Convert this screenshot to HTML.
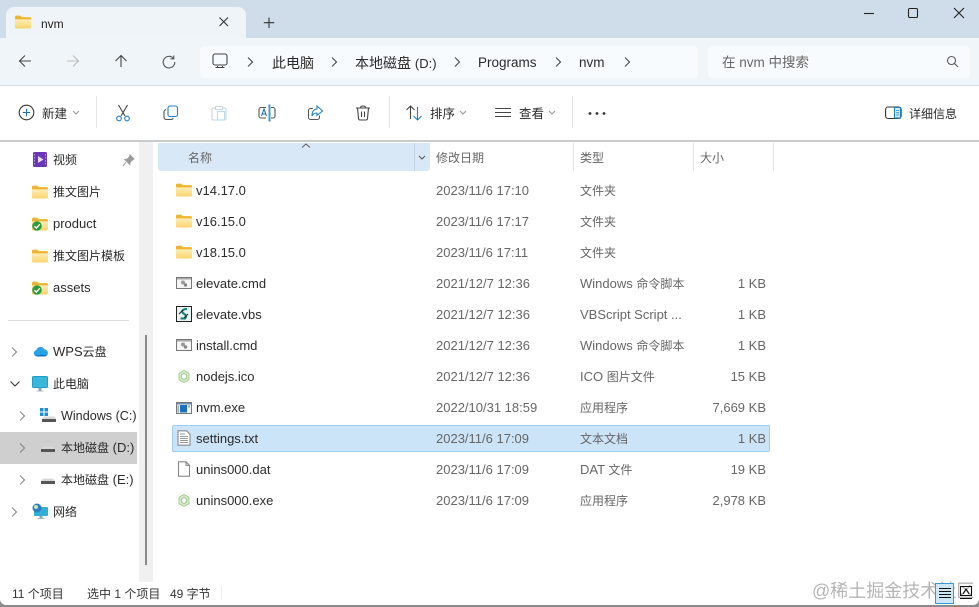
<!DOCTYPE html>
<html lang="zh-CN"><head><meta charset="utf-8"><title>nvm</title>
<style>
html,body{margin:0;padding:0;width:979px;height:607px;overflow:hidden;background:#8a8a8a}
body{position:relative;font-family:"Liberation Sans","Noto Sans CJK SC",sans-serif;font-size:13px;color:#222}
div,span,svg{position:absolute}
em{position:static;font-style:normal;font-size:12px}
.t{white-space:nowrap;line-height:20px;height:20px;margin-top:1px}
.d{left:436px;color:#666}
.y{left:580px;color:#666}
.s{right:213px;color:#666}
.n{left:196px;color:#2a2a2a}
.h{color:#666;font-size:12px;top:148px;margin-top:0}
.m{left:53px;font-size:12px;color:#2a2a2a}
.tb{font-size:12px;color:#2a2a2a;top:103px}
.a{font-size:14px;color:#2a2a2a;top:52px}
.i{fill:none;stroke:#444;stroke-width:1.1}
.sep{width:1px;background:#e1e4e8}
</style></head>
<body>
<svg width="0" height="0" style="position:absolute"><defs>
<linearGradient id="fg" x1="0" y1="0" x2="0" y2="1"><stop offset="0" stop-color="#ffeeb8"/><stop offset="1" stop-color="#fbd36b"/></linearGradient>
<symbol id="folder" viewBox="0 0 16 14"><path d="M0 2.200C0 1.200.6.600 1.500.600h3.600l1.600 1.500H14.800c.7 0 1.200.5 1.200 1.200V12c0 .9-.6 1.400-1.400 1.400H1.400C.6 13.400 0 12.900 0 12z" fill="#efb52f"/><path d="M0 4.400h16V12c0 .9-.6 1.400-1.400 1.400H1.400C.6 13.400 0 12.900 0 12z" fill="url(#fg)"/></symbol>
<symbol id="cmd" viewBox="0 0 16 12"><rect x=".5" y=".5" width="15" height="11" fill="#f5f5f5" stroke="#777"/><rect x="1" y="1" width="14" height="1.500" fill="#a9a9a9"/><circle cx="7" cy="5.500" r="2" fill="#999"/><circle cx="9.500" cy="8" r="1.700" fill="#888"/></symbol>
<symbol id="node" viewBox="0 0 12 13"><path d="M6 .5 11 3.300v6.400L6 12.500 1 9.700V3.300z" fill="#dceccf" stroke="#a6cc90"/><path d="M6 3.500 8.600 5v3L6 9.500 3.400 8V5z" fill="#fff" stroke="#9cc585"/></symbol>
<symbol id="chk" viewBox="0 0 10 10"><circle cx="5" cy="5" r="4.800" fill="#2f9a3a"/><path d="M2.400 5.200 4.300 7.100 7.800 3.300" fill="none" stroke="#fff" stroke-width="1.400"/></symbol>
<symbol id="drive" viewBox="0 0 14 6"><path d="M2 .5h10l2 2.500v3H0V3z" fill="#d8d8d8"/><rect y="3" width="14" height="3" fill="#555"/></symbol>
</defs></svg>

<div style="left:0;top:0;width:979px;height:605px;background:#fff;border-radius:0 0 6px 6px;overflow:hidden">
<!-- title -->
<div style="left:0;top:0;width:979px;height:38px;background:#cfdcea"></div>
<div style="left:6px;top:7px;width:240px;height:32px;background:#eff4f9;border-radius:8px 8px 0 0"></div>
<svg style="left:15px;top:15px" width="16" height="14"><use href="#folder"/></svg>
<span class="t" style="left:41px;top:13px;font-size:12px;color:#222;font-weight:400">nvm</span>
<svg class="i" style="left:218px;top:16px;stroke:#333" width="12" height="12"><path d="M1.500 1.500l8.500 8.500M10 1.500l-8.500 8.500"/></svg>
<svg class="i" style="left:262px;top:17px;stroke:#333" width="14" height="12"><path d="M7 .5v10.500M1.800 5.700h10.400"/></svg>
<svg class="i" style="left:863px;top:10px;stroke:#222" width="12" height="8"><path d="M1 3.500h10"/></svg>
<svg class="i" style="left:907px;top:7px;stroke:#222" width="12" height="12"><rect x="1.500" y="1.500" width="9" height="9" rx="1.200"/></svg>
<svg class="i" style="left:953px;top:7px;stroke:#222" width="12" height="12"><path d="M1 1l10 10M11 1L1 11"/></svg>
<!-- nav -->
<div style="left:0;top:38px;width:979px;height:47px;background:#f0f5fa"></div>
<div style="left:0;top:85px;width:979px;height:1px;background:#d6dae0"></div>
<svg class="i" style="left:17px;top:53px;stroke:#444" width="16" height="16"><path d="M14 8H2.500M8 2.500 2.500 8 8 13.500"/></svg>
<svg class="i" style="left:65px;top:53px;stroke:#bbb" width="16" height="16"><path d="M2 8h11.500M8 2.500 13.500 8 8 13.500"/></svg>
<svg class="i" style="left:113px;top:53px;stroke:#444" width="16" height="16"><path d="M8 14V2.500M2.500 8 8 2.500 13.500 8"/></svg>
<svg class="i" style="left:161px;top:54px;stroke:#555" width="16" height="16"><path d="M12.500 4.500A5.800 5.800 0 1 0 13.800 8M12.800 1.500v3.300H9.500"/></svg>
<div style="left:200px;top:46px;width:498px;height:32px;background:#f8fbfd;border-radius:4px"></div>
<div style="left:708px;top:46px;width:262px;height:32px;background:#f8fbfd;border-radius:4px"></div>
<svg class="i" style="left:212px;top:53px;stroke:#444" width="17" height="17"><rect x="1" y="1" width="14" height="11" rx="2"/><path d="M3.500 14.500h9M5.500 13v1.500M10.500 13v1.500"/></svg>
<svg class="i" style="left:246px;top:56px" width="8" height="12"><path d="M2 1.500 6.500 6 2 10.500"/></svg>
<span class="t a" style="left:272px">此电脑</span>
<svg class="i" style="left:330px;top:56px" width="8" height="12"><path d="M2 1.500 6.500 6 2 10.500"/></svg>
<span class="t a" style="left:355px">本地磁盘 <span style="position:static;font-size:13px">(D:)</span></span>
<svg class="i" style="left:453px;top:56px" width="8" height="12"><path d="M2 1.500 6.500 6 2 10.500"/></svg>
<span class="t a" style="left:478px;font-size:13.500px">Programs</span>
<svg class="i" style="left:554px;top:56px" width="8" height="12"><path d="M2 1.500 6.500 6 2 10.500"/></svg>
<span class="t a" style="left:579px;font-size:13.500px">nvm</span>
<svg class="i" style="left:623px;top:56px" width="8" height="12"><path d="M2 1.500 6.500 6 2 10.500"/></svg>
<span class="t" style="left:722px;top:52px;font-size:13.500px;color:#666">在 nvm 中搜索</span>
<svg class="i" style="left:946px;top:55px;stroke:#555" width="13" height="13"><circle cx="5.500" cy="5.500" r="4"/><path d="M8.500 8.500l3.500 3.500"/></svg>
<!-- toolbar -->
<svg class="i" style="left:18px;top:104px;stroke:#333" width="17" height="17"><circle cx="8.500" cy="8.500" r="7.300"/><path d="M8.500 4.800v7.400M4.800 8.500h7.400" stroke="#1f6fb5"/></svg>
<span class="t tb" style="left:42px;font-size:12.500px">新建</span>
<svg class="i" style="left:72px;top:110px;stroke:#999" width="8" height="6"><path d="M1 1l3 3 3-3"/></svg>
<div class="sep" style="left:96px;top:96px;height:32px"></div>
<svg class="i" style="left:115px;top:104px;stroke:#444" width="16" height="18"><path d="M3.500 1l6.500 11M12.500 1 6 12"/><circle cx="4" cy="14.500" r="2.300" stroke="#1f7fc4"/><circle cx="12" cy="14.500" r="2.300" stroke="#1f7fc4"/></svg>
<svg class="i" style="left:163px;top:105px;stroke:#1f7fc4" width="16" height="16"><rect x="5" y="1" width="9.500" height="10.500" rx="2"/><path d="M3 4.500C1.800 5 1 5.800 1 7v5c0 1.500 1 2.500 2.500 2.500H8c1 0 1.800-.5 2.200-1.500" stroke="#555"/></svg>
<svg class="i" style="left:211px;top:105px;stroke:#c9d3da" width="16" height="16"><path d="M4 3H2.500C1.700 3 1 3.700 1 4.500v9c0 .8.700 1.500 1.500 1.500H13.500c.8 0 1.500-.7 1.500-1.500v-9c0-.8-.7-1.500-1.500-1.500H12M4.500 1.500h7V4.500h-7z"/><rect x="6.500" y="6.500" width="7" height="8.500" stroke="#bcdcee"/></svg>
<svg class="i" style="left:258px;top:104px;stroke:#555" width="18" height="18"><path d="M8 3.500H3A2 2 0 0 0 1 5.500v6.500a2 2 0 0 0 2 2h5M13 3.500h2a2 2 0 0 1 2 2V12a2 2 0 0 1-2 2h-2"/><path d="M10.500 1h2M10.500 17h2M11 1v16M12 1v16" stroke="#1f7fc4" stroke-width=".8"/><path d="M3.500 12 6 5l2.500 7M4.300 10h3.400" stroke="#1f6fb5"/></svg>
<svg class="i" style="left:307px;top:105px;stroke:#1f7fc4" width="17" height="16"><path d="M6 3.500H3.500a2 2 0 0 0-2 2v7a2 2 0 0 0 2 2h7a2 2 0 0 0 2-2v-2" stroke="#555"/><path d="M10 1l5.500 5L10 10.500V8C7.500 8 6 9 5 11c0-4 1.500-6.800 5-7z"/></svg>
<svg class="i" style="left:355px;top:105px;stroke:#444" width="16" height="16"><path d="M1 3h14M5.500 3c0-1 .8-2 2.500-2s2.500 1 2.500 2M2.500 3l1 10.500c.1.900.8 1.500 1.500 1.500h6c.7 0 1.400-.6 1.500-1.500l1-10.500M6.500 6.500v5.500M9.500 6.500v5.500"/></svg>
<div class="sep" style="left:389px;top:96px;height:32px"></div>
<svg class="i" style="left:405px;top:104px;stroke:#444" width="18" height="18"><path d="M5.500 15V2M1.500 6l4-4 4 4"/><path d="M12.500 3v13M8.500 12l4 4 4-4" stroke="#1f7fc4"/></svg>
<span class="t tb" style="left:430px;font-size:12.500px">排序</span>
<svg class="i" style="left:459px;top:110px;stroke:#999" width="8" height="6"><path d="M1 1l3 3 3-3"/></svg>
<svg class="i" style="left:495px;top:107px;stroke:#444" width="16" height="12"><path d="M0 1.500h16M0 5.500h16M0 9.500h16"/></svg>
<span class="t tb" style="left:519px;font-size:12.500px">查看</span>
<svg class="i" style="left:548px;top:110px;stroke:#999" width="8" height="6"><path d="M1 1l3 3 3-3"/></svg>
<div class="sep" style="left:572px;top:96px;height:32px"></div>
<svg style="left:588px;top:111px" width="18" height="5"><circle cx="2" cy="2.500" r="1.400" fill="#333"/><circle cx="9" cy="2.500" r="1.400" fill="#333"/><circle cx="16" cy="2.500" r="1.400" fill="#333"/></svg>
<svg class="i" style="left:885px;top:106px;stroke:#333" width="17" height="14"><rect x=".6" y="1" width="15.500" height="11.500" rx="2.500"/><rect x="9.500" y="1.500" width="6" height="10.500" fill="#d8edf9" stroke="#1f7fc4"/><path d="M11 4.500h3M11 6.800h3M11 9h3" stroke="#1f7fc4" stroke-width=".8"/></svg>
<span class="t tb" style="left:909px">详细信息</span>
<div style="left:0;top:140px;width:979px;height:2px;background:#c9cbcd"></div>
<!-- nav pane -->
<div style="left:139px;top:142px;width:14px;height:440px;background:#f0f0f0"></div>
<div style="left:145px;top:335px;width:2px;height:230px;background:#8a8a8a"></div>
<svg style="left:33px;top:152px" width="14" height="15"><rect width="14" height="15" rx="1.500" fill="#6a37b8"/><path d="M5 4l5.500 3.500L5 11z" fill="#e6d7fb"/><path d="M1.500 2v11M12.500 2v11" stroke="#b59ae0" stroke-dasharray="1.500 1.500"/></svg>
<span class="t m" style="top:149px">视频</span>
<svg style="left:122px;top:154px" width="13" height="13"><path d="M8 1l4 4-1.200.6-2.600 2.400-.4 2.500-5-5 2.500-.4 2.500-2.600z M3.800 8.300 1 12" fill="#9a9a9a" stroke="#9a9a9a"/></svg>
<svg style="left:32px;top:185px" width="16" height="14"><use href="#folder"/></svg>
<span class="t m" style="top:181px">推文图片</span>
<svg style="left:32px;top:217px" width="16" height="14"><use href="#folder"/></svg>
<svg style="left:32px;top:221px" width="10" height="10"><use href="#chk"/></svg>
<span class="t m" style="top:213px;font-size:13px">product</span>
<svg style="left:32px;top:249px" width="16" height="14"><use href="#folder"/></svg>
<span class="t m" style="top:245px">推文图片模板</span>
<svg style="left:32px;top:281px" width="16" height="14"><use href="#folder"/></svg>
<svg style="left:32px;top:285px" width="10" height="10"><use href="#chk"/></svg>
<span class="t m" style="top:277px;font-size:13px">assets</span>
<div style="left:8px;top:320px;width:121px;height:1px;background:#dcdcdc"></div>
<svg class="i" style="left:10px;top:346px;stroke:#888" width="8" height="12"><path d="M2 1.500 6.500 6 2 10.500"/></svg>
<svg style="left:33px;top:345px" width="15" height="12"><path d="M4 11.500a3.300 3.300 0 0 1-.6-6.500 4.300 4.300 0 0 1 8-.6 3.500 3.500 0 0 1 0 7.100z" fill="#27a3e6"/><path d="M1 9.500c2 1 5 1 7 0l6 1-2 1H4z" fill="#1273c9"/></svg>
<span class="t m" style="top:341px;font-size:13px">WPS<em>云盘</em></span>
<svg class="i" style="left:9px;top:380px;stroke:#333" width="12" height="8"><path d="M1.500 1.500 6 6l4.500-4.500"/></svg>
<svg style="left:32px;top:376px" width="16" height="16"><rect width="16" height="12" rx="1.500" fill="#1f9fc9"/><rect x="1" y="1" width="14" height="10" fill="#3ab6d8"/><path d="M6.500 12h3v2.500h-3z" fill="#8aa"/><path d="M4.500 14.500h7v1h-7z" fill="#a8b8bf"/></svg>
<span class="t m" style="top:373px">此电脑</span>
<svg class="i" style="left:18px;top:410px;stroke:#888" width="8" height="12"><path d="M2 1.500 6.500 6 2 10.500"/></svg>
<svg style="left:40px;top:408px" width="16" height="15"><path d="M0 0h3.500v3.500H0zM4.500 0H8v3.500H4.500zM0 4.500h3.500V8H0zM4.500 4.500H8V8H4.500z" fill="#1f8fd0"/><use href="#drive" x="2" y="8" width="14" height="6"/></svg>
<span class="t" style="left:61px;top:405px;font-size:12.600px;color:#2a2a2a">Windows (C:)</span>
<div style="left:0;top:432px;width:137px;height:32px;background:#cfcfcf"></div>
<svg class="i" style="left:18px;top:442px;stroke:#888" width="8" height="12"><path d="M2 1.500 6.500 6 2 10.500"/></svg>
<svg style="left:41px;top:446px" width="14" height="6"><use href="#drive"/></svg>
<span class="t" style="left:61px;top:437px;font-size:13px;color:#2a2a2a"><em>本地磁盘</em> (D:)</span>
<svg class="i" style="left:18px;top:474px;stroke:#888" width="8" height="12"><path d="M2 1.500 6.500 6 2 10.500"/></svg>
<svg style="left:41px;top:478px" width="14" height="6"><use href="#drive"/></svg>
<span class="t" style="left:61px;top:469px;font-size:13px;color:#2a2a2a"><em>本地磁盘</em> (E:)</span>
<svg class="i" style="left:10px;top:506px;stroke:#888" width="8" height="12"><path d="M2 1.500 6.500 6 2 10.500"/></svg>
<svg style="left:32px;top:503px" width="16" height="17"><rect x="2" y="4" width="14" height="9" rx="1" fill="#33aed4"/><circle cx="5" cy="5" r="4.500" fill="#2e7ebd"/><circle cx="4" cy="4" r="2" fill="#bfe5c8"/><path d="M7.500 13h3v2h-3z" fill="#8aa"/><path d="M5.500 15h7v1h-7z" fill="#a8b8bf"/></svg>
<span class="t m" style="top:501px">网络</span>
<!-- header -->
<div style="left:158px;top:143px;width:272px;height:28px;background:#d9e8f6;border-radius:0 0 3px 3px"></div>
<div style="left:414px;top:143px;width:1px;height:28px;background:#c3d3e2"></div>
<svg class="i" style="left:301px;top:143px;stroke:#666" width="10" height="6"><path d="M1 4.500 5 1l4 3.500"/></svg>
<svg class="i" style="left:418px;top:155px;stroke:#555" width="8" height="6"><path d="M1 1l3 3 3-3"/></svg>
<span class="t h" style="left:188px">名称</span>
<span class="t h" style="left:436px">修改日期</span>
<div class="sep" style="left:573px;top:143px;height:28px"></div>
<span class="t h" style="left:580px">类型</span>
<div class="sep" style="left:693px;top:143px;height:28px"></div>
<span class="t h" style="left:700px">大小</span>
<div class="sep" style="left:773px;top:143px;height:28px"></div>
<!-- selection -->
<div style="left:172px;top:425px;width:596px;height:25px;background:#cce4f8;border:1px solid #9fcdf0;border-radius:2px"></div>
<!-- rows -->
<svg style="left:176px;top:183px" width="16" height="14"><use href="#folder"/></svg><span class="t n" style="top:180px">v14.17.0</span><span class="t d" style="top:180px">2023/11/6 17:10</span><span class="t y" style="top:180px"><em>文件夹</em></span>
<svg style="left:176px;top:214px" width="16" height="14"><use href="#folder"/></svg><span class="t n" style="top:211px">v16.15.0</span><span class="t d" style="top:211px">2023/11/6 17:17</span><span class="t y" style="top:211px"><em>文件夹</em></span>
<svg style="left:176px;top:245px" width="16" height="14"><use href="#folder"/></svg><span class="t n" style="top:242px">v18.15.0</span><span class="t d" style="top:242px">2023/11/6 17:11</span><span class="t y" style="top:242px"><em>文件夹</em></span>
<svg style="left:176px;top:277px" width="16" height="12"><use href="#cmd"/></svg><span class="t n" style="top:273px">elevate.cmd</span><span class="t d" style="top:273px">2021/12/7 12:36</span><span class="t y" style="top:273px">Windows <em>命令脚本</em></span><span class="t s" style="top:273px">1 KB</span>
<svg style="left:176px;top:306px" width="16" height="16"><rect x=".5" y=".5" width="15" height="15" fill="#e8f4ee" stroke="#222"/><path d="M11 3C6 3 5 6 7.500 7.500S11 10 9 12.500H4.500" fill="none" stroke="#147a7a" stroke-width="2"/><path d="M3 8l4-4M8 12l4-4" stroke="#222" stroke-width="1"/></svg><span class="t n" style="top:304px">elevate.vbs</span><span class="t d" style="top:304px">2021/12/7 12:36</span><span class="t y" style="top:304px">VBScript Script ...</span><span class="t s" style="top:304px">1 KB</span>
<svg style="left:176px;top:339px" width="16" height="12"><use href="#cmd"/></svg><span class="t n" style="top:335px">install.cmd</span><span class="t d" style="top:335px">2021/12/7 12:36</span><span class="t y" style="top:335px">Windows <em>命令脚本</em></span><span class="t s" style="top:335px">1 KB</span>
<svg style="left:178px;top:370px" width="12" height="13"><use href="#node"/></svg><span class="t n" style="top:366px">nodejs.ico</span><span class="t d" style="top:366px">2021/12/7 12:36</span><span class="t y" style="top:366px">ICO <em>图片文件</em></span><span class="t s" style="top:366px">15 KB</span>
<svg style="left:176px;top:402px" width="16" height="12"><rect x=".5" y=".5" width="15" height="11" fill="#f4f4f4" stroke="#777"/><rect x="1" y="1" width="14" height="1.500" fill="#6b8fb5"/><rect x="4" y="3" width="7" height="7.500" fill="#1a6fc0"/><rect x="1.500" y="3.500" width="1.500" height="7" fill="#9ab"/><rect x="12" y="3.500" width="2" height="2" fill="#9ab"/></svg><span class="t n" style="top:397px">nvm.exe</span><span class="t d" style="top:397px">2022/10/31 18:59</span><span class="t y" style="top:397px"><em>应用程序</em></span><span class="t s" style="top:397px">7,669 KB</span>
<svg class="i" style="left:177px;top:430px;stroke:#888" width="14" height="16"><path d="M1 .8h8.500L13 4.300V15.200H1z" fill="#fff"/><path d="M3 4h5M3 6.500h8M3 8.500h8M3 10.500h8M3 12.500h8" stroke="#999"/></svg><span class="t n" style="top:428px">settings.txt</span><span class="t d" style="top:428px">2023/11/6 17:09</span><span class="t y" style="top:428px"><em>文本文档</em></span><span class="t s" style="top:428px">1 KB</span>
<svg class="i" style="left:177px;top:461px;stroke:#888" width="14" height="16"><path d="M1.500 .8h7.500L12.500 4.300V15.200H1.500zM9 .8v3.500h3.500" fill="#fff"/></svg><span class="t n" style="top:459px">unins000.dat</span><span class="t d" style="top:459px">2023/11/6 17:09</span><span class="t y" style="top:459px">DAT <em>文件</em></span><span class="t s" style="top:459px">19 KB</span>
<svg style="left:178px;top:494px" width="12" height="13"><use href="#node"/></svg><span class="t n" style="top:490px">unins000.exe</span><span class="t d" style="top:490px">2023/11/6 17:09</span><span class="t y" style="top:490px"><em>应用程序</em></span><span class="t s" style="top:490px">2,978 KB</span>
<!-- status -->
<span class="t" style="left:12px;top:583px;font-size:12px;color:#333">11 个项目</span>
<span class="t" style="left:87px;top:583px;font-size:12px;color:#333">选中 1 个项目</span>
<span class="t" style="left:170px;top:583px;font-size:12px;color:#333">49 字节</span>
<div class="sep" style="left:221px;top:586px;height:14px;background:#eee"></div>
<span class="t" style="left:812px;top:580px;font-size:18px;line-height:22px;color:#b5b5b5;margin-top:0">@稀土掘金技术社区</span>
<div style="left:935px;top:583px;width:19px;height:21px;background:#cde7f4;border:1px solid #3a9ad0;box-sizing:border-box"></div>
<svg class="i" style="left:939px;top:586px;stroke:#111" width="12" height="14"><path d="M0 2.500h12M0 5.500h12M0 8.500h12M0 11.500h12"/></svg>
<svg class="i" style="left:960px;top:586px;stroke:#111" width="13" height="14"><rect x=".5" y=".5" width="11" height="9"/><path d="M0 12.500h12M3 8l3-5 3 5"/></svg>
</div>
</body></html>
